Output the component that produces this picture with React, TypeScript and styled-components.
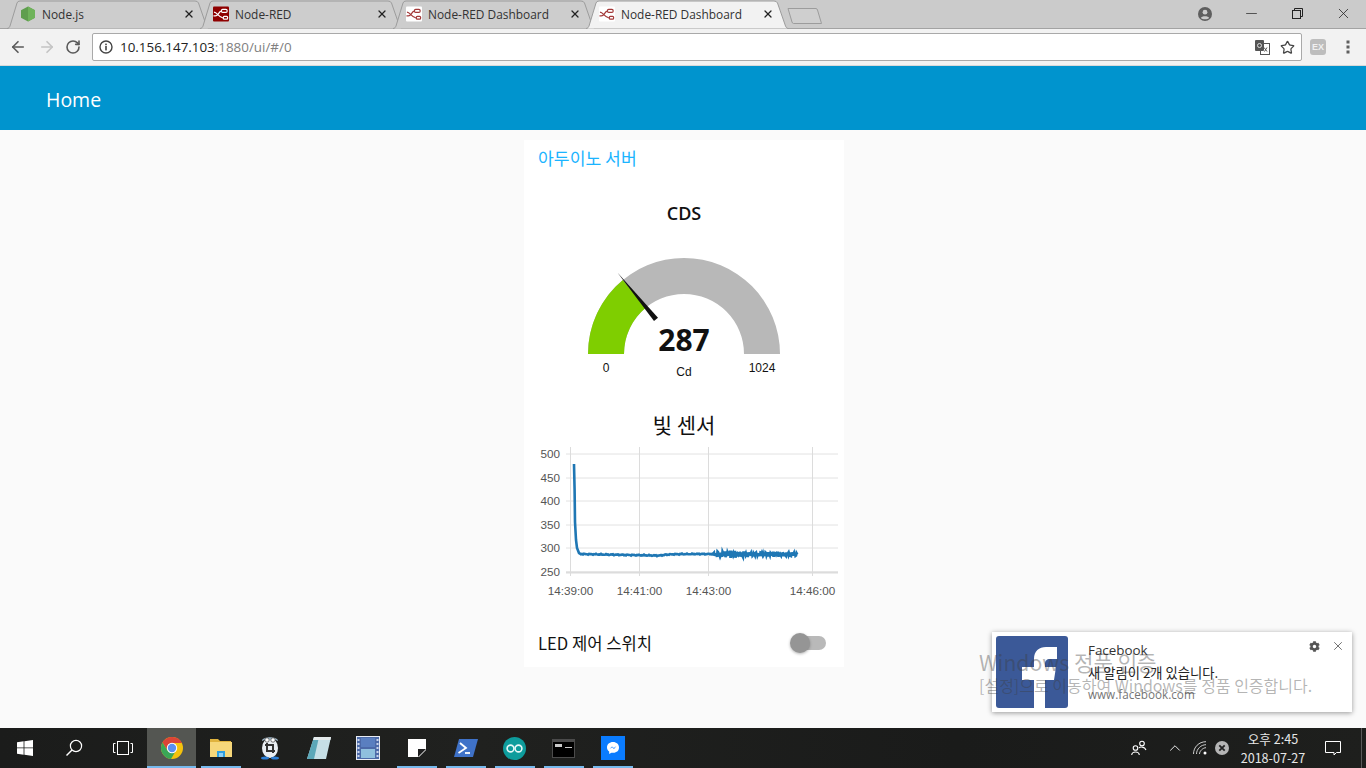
import React from 'react';
import styled, { createGlobalStyle } from 'styled-components';
import { ArrowLeft, ArrowRight, RotateCw, Star, X, Minus, ChevronUp } from 'lucide-react';
import { FaCog } from 'react-icons/fa';

const UI_FONT = '"Open Sans", "Noto Sans CJK KR", sans-serif';
const KR_FONT = '"Noto Sans CJK KR", "Open Sans", sans-serif';

const GlobalStyle = createGlobalStyle`
  html, body {
    margin: 0;
    padding: 0;
    height: 100%;
    overflow: hidden;
  }
  #root { height: 100%; }
  * { box-sizing: border-box; }
`;

const Screen = styled.div`
  position: relative;
  height: 768px;
  display: flex;
  flex-direction: column;
  background: #fafafa;
  font-family: ${UI_FONT};
  overflow: hidden;
`;

/* browser chrome */
const TabStrip = styled.div`
  height: 29px;
  flex-shrink: 0;
  display: flex;
  padding-left: 7px;
  background: #cbcbcb;
  border-bottom: 1px solid #a3a3a3;
`;

const TabItem = styled.div<{ $active?: boolean }>`
  position: relative;
  width: 193px;
  height: 29px;
  display: flex;
  align-items: center;
  padding: 0 5px 2px 13px;
  z-index: ${props => (props.$active ? 2 : 1)};
`;

const TabShapeSvg = styled.svg`
  position: absolute;
  left: 0;
  top: 0;
`;

const TabIcon = styled.span`
  position: relative;
  width: 16px;
  height: 16px;
  display: flex;
  flex-shrink: 0;
`;

const TabTitle = styled.span`
  position: relative;
  margin-left: 6px;
  font-size: 11.9px;
  color: #333;
  white-space: nowrap;
`;

const TabClose = styled.span`
  position: relative;
  margin-left: auto;
  width: 12px;
  height: 12px;
  display: flex;
  color: #222;
`;

const NewTab = styled.svg`
  flex-shrink: 0;
  margin: 7px 0 0 8px;
  position: relative;
  z-index: 0;
`;

const WindowControls = styled.div`
  margin-left: auto;
  display: flex;
  align-items: center;
  height: 27px;
`;

const ControlButton = styled.span<{ $w: number }>`
  width: ${props => props.$w}px;
  display: flex;
  justify-content: center;
  color: #222;
`;

const Toolbar = styled.div`
  height: 37px;
  flex-shrink: 0;
  display: flex;
  align-items: center;
  padding: 0 8px;
  background: #f2f2f2;
  border-bottom: 1px solid #d9d9d9;
`;

const NavButton = styled.span<{ $disabled?: boolean; $gap?: number }>`
  width: 20px;
  margin-left: ${props => props.$gap ?? 0}px;
  display: flex;
  justify-content: center;
  flex-shrink: 0;
  color: ${props => (props.$disabled ? '#c4c4c4' : '#5a5a5a')};
`;

const Omnibox = styled.div`
  flex: 1;
  height: 28px;
  margin: 0 6px 0 9px;
  padding: 0 6px;
  display: flex;
  align-items: center;
  background: #fff;
  border: 1px solid #a9a9a9;
  border-radius: 2px;
`;

const UrlText = styled.span`
  margin-left: 7px;
  font-size: 13.4px;
  color: #222;
`;

const UrlMuted = styled.span`
  color: #808080;
`;

const OmniActions = styled.div`
  margin-left: auto;
  display: flex;
  align-items: center;
  gap: 10px;
  color: #444;
`;

const ExtBadge = styled.span`
  width: 16px;
  height: 16px;
  border-radius: 3px;
  background: #bdbdbd;
  color: #f0f0f0;
  font-family: "Liberation Sans", sans-serif;
  font-size: 9px;
  font-weight: 700;
  display: flex;
  align-items: center;
  justify-content: center;
`;

/* dashboard */
const AppHeader = styled.header`
  height: 64px;
  flex-shrink: 0;
  display: flex;
  align-items: center;
  padding: 2px 0 0 46px;
  background: #0094ce;
  color: #fff;
  font-size: 19.5px;
`;

const Content = styled.main`
  flex: 1;
  display: flex;
  justify-content: center;
  padding: 10px 0 0 2px;
`;

const Card = styled.section`
  width: 320px;
  height: 527px;
  display: flex;
  flex-direction: column;
  background: #fff;
`;

const GroupTitle = styled.div`
  height: 35px;
  margin-bottom: 1px;
  display: flex;
  align-items: center;
  padding-left: 14px;
  color: #1bb4ff;
  font-family: ${KR_FONT};
  font-size: 17.2px;
`;

const GaugeTitle = styled.div`
  height: 74px;
  display: flex;
  align-items: center;
  justify-content: center;
  color: #111;
  font-size: 18px;
  font-weight: 600;
`;

const ChartTitle = styled.div`
  height: 38px;
  margin-top: 20px;
  display: flex;
  align-items: center;
  justify-content: center;
  color: #111;
  font-family: ${KR_FONT};
  font-size: 21px;
`;

const WidgetSvg = styled.svg`
  display: block;
  flex-shrink: 0;
`;

const SwitchRow = styled.div`
  height: 48px;
  margin-top: 14px;
  display: flex;
  align-items: center;
  justify-content: space-between;
  padding: 0 18px 0 14px;
  color: #111;
  font-family: ${KR_FONT};
  font-size: 16.6px;
`;

const SwitchTrack = styled.span`
  position: relative;
  width: 33px;
  height: 14px;
  border-radius: 7px;
  background: #b9b9b9;
`;

const SwitchThumb = styled.span`
  position: absolute;
  left: -3px;
  top: -3px;
  width: 20px;
  height: 20px;
  border-radius: 50%;
  background: #959595;
  box-shadow: 0 1px 3px rgba(0, 0, 0, 0.3);
`;

/* overlays */
const Notification = styled.aside`
  position: absolute;
  left: 992px;
  top: 632px;
  width: 360px;
  height: 80px;
  padding: 4px;
  display: flex;
  background: #fff;
  box-shadow: 0 1px 5px rgba(0, 0, 0, 0.4);
`;

const NotifyBody = styled.div`
  margin-left: 20px;
  display: flex;
  flex-direction: column;
  padding-top: 4px;
`;

const NotifyTitle = styled.div`
  font-size: 13.4px;
  line-height: 20px;
  color: #333;
`;

const NotifyMessage = styled.div`
  margin-top: 3px;
  font-family: ${KR_FONT};
  font-size: 13.3px;
  line-height: 20px;
  color: #222;
`;

const NotifySource = styled.div`
  margin-top: 1px;
  font-size: 11.7px;
  line-height: 20px;
  color: #757575;
`;

const NotifyActions = styled.div`
  position: absolute;
  right: 7px;
  top: 7px;
  display: flex;
  align-items: center;
  gap: 11px;
  color: #555;
`;

const Watermark = styled.div`
  position: absolute;
  left: 979px;
  top: 649px;
  color: rgba(60, 60, 60, 0.38);
  font-family: ${KR_FONT};
  pointer-events: none;
`;

const WatermarkHead = styled.div`
  font-size: 21.2px;
  line-height: 26px;
`;

const WatermarkSub = styled.div`
  font-size: 16px;
  line-height: 20px;
`;

/* taskbar */
const Taskbar = styled.footer`
  height: 40px;
  flex-shrink: 0;
  display: flex;
  align-items: stretch;
  background: linear-gradient(90deg, #1b1c1b, #20211f 35%, #1a1b1a 70%, #1e1f1d);
  color: #fff;
`;

const TaskButton = styled.div<{ $active?: boolean; $running?: boolean }>`
  position: relative;
  width: 49px;
  display: flex;
  align-items: center;
  justify-content: center;
  background: ${props => (props.$active ? '#545652' : 'transparent')};

  &::after {
    content: '';
    display: ${props => (props.$running ? 'block' : 'none')};
    position: absolute;
    bottom: 0;
    left: ${props => (props.$active ? 0 : '5px')};
    right: ${props => (props.$active ? 0 : '4px')};
    height: 2px;
    background: #76b9ed;
  }
`;

const Tray = styled.div`
  margin-left: auto;
  display: flex;
  align-items: center;
`;

const TraySlot = styled.span<{ $w: number }>`
  width: ${props => props.$w}px;
  display: flex;
  justify-content: center;
`;

const Clock = styled.div`
  width: 74px;
  font-family: ${KR_FONT};
  font-size: 12.6px;
  line-height: 19px;
  text-align: center;
  white-space: nowrap;
  color: #e8e8e8;
`;

const DesktopEdge = styled.span`
  width: 5px;
  margin-left: 5px;
  border-left: 1px solid #5a5a5a;
  align-self: stretch;
`;

/* drawings */
const TabShape: React.FC<{ active?: boolean }> = ({ active }) => (
  <TabShapeSvg width="204" height="29" viewBox="0 0 204 29">
    <path
      d="M0 28.5 C2 28.5 2.5 27 3 26 L10 3 Q10.6 1 13 1 H188 Q190.6 1 191.5 3 L199.5 26 C200 27 200.5 28.5 202.5 28.5"
      fill={active ? '#f2f2f2' : '#cdcdcd'}
      stroke="#9c9c9c"
    />
  </TabShapeSvg>
);

const NodeJsIcon = () => (
  <svg width="16" height="16" viewBox="0 0 16 16">
    <path d="M8 0.5 L15 4.3 V11.7 L8 15.5 L1 11.7 V4.3 Z" fill="#5f9e4e" />
    <path d="M8 0.5 L15 4.3 V11.7 L8 15.5 Z" fill="#6fb35a" />
  </svg>
);

const NodeRedIcon: React.FC<{ filled?: boolean }> = ({ filled }) => (
  <svg width="17" height="16" viewBox="0 0 17 16">
    <rect width="17" height="16" rx="1" fill={filled ? '#8f0000' : '#fff'} />
    <g fill="none" stroke={filled ? '#fff' : '#a33a3a'} strokeWidth="1.3">
      <path d="M0.5 10 H2.5 C6 10 6 5 9 5" />
      <path d="M1 6 C4.5 6 6 12 10.5 12" />
      <rect x="9" y="3" width="6" height="3.2" rx="1.2" />
      <rect x="11" y="10.5" width="4.5" height="3" rx="1" />
    </g>
  </svg>
);

const AccountIcon = () => (
  <svg width="14" height="14" viewBox="0 0 14 14">
    <circle cx="7" cy="7" r="7" fill="#5f5f5f" />
    <circle cx="7" cy="5.2" r="2.4" fill="#cbcbcb" />
    <path d="M2.8 11 C3.6 8.8 10.4 8.8 11.2 11 C9.5 12.8 4.5 12.8 2.8 11 Z" fill="#cbcbcb" />
  </svg>
);

const RestoreIcon = () => (
  <svg width="11" height="11" viewBox="0 0 11 11" fill="none" stroke="#222">
    <rect x="0.5" y="2.5" width="8" height="8" />
    <path d="M2.5 2.5 V0.5 H10.5 V8.5 H8.5" />
  </svg>
);

const InfoIcon = () => (
  <svg width="14" height="14" viewBox="0 0 14 14">
    <circle cx="7" cy="7" r="6" fill="none" stroke="#444" strokeWidth="1.4" />
    <rect x="6.2" y="6" width="1.6" height="4.4" fill="#444" />
    <rect x="6.2" y="3.6" width="1.6" height="1.6" fill="#444" />
  </svg>
);

const TranslateIcon = () => (
  <svg width="15" height="15" viewBox="0 0 15 15">
    <rect x="5.5" y="3.5" width="9" height="11" fill="#fff" stroke="#555" />
    <rect x="0" y="0" width="9" height="11" rx="1" fill="#555" />
    <circle cx="4.5" cy="5.5" r="2" fill="none" stroke="#ddd" />
    <path d="M9 7.5 L12 11.5 M12 7.5 L9.5 11.5" stroke="#555" />
  </svg>
);

const MenuDots = () => (
  <svg width="4" height="14" viewBox="0 0 4 14" fill="#5f5f5f">
    <rect x="0.5" y="0.5" width="3" height="3" />
    <rect x="0.5" y="5.5" width="3" height="3" />
    <rect x="0.5" y="10.5" width="3" height="3" />
  </svg>
);

const FacebookTile = () => (
  <svg width="72" height="72" viewBox="0 0 72 72">
    <rect width="72" height="72" rx="3" fill="#3b5998" />
    <path
      d="M38 72 V44 H26 V31 H38 V23 C38 15 43 11 50 11 H61 V23 H54 C50.5 23 49 25 49 28 V31 H60 L58 44 H49 V72 Z"
      fill="#fff"
    />
  </svg>
);

const StartIcon = () => (
  <svg width="16" height="16" viewBox="0 0 16 16" fill="#fff">
    <path d="M0 2.3 L6.6 1.3 V7.5 H0 Z" />
    <path d="M7.4 1.2 L16 0 V7.5 H7.4 Z" />
    <path d="M0 8.3 H6.6 V14.7 L0 13.7 Z" />
    <path d="M7.4 8.3 H16 V16 L7.4 14.8 Z" />
  </svg>
);

const SearchIcon = () => (
  <svg width="18" height="18" viewBox="0 0 18 18" fill="none" stroke="#fff" strokeWidth="1.2">
    <circle cx="11" cy="7" r="5.6" />
    <path d="M7 11 L1.5 16.5" strokeWidth="1.5" />
  </svg>
);

const TaskViewIcon = () => (
  <svg width="20" height="14" viewBox="0 0 20 14" fill="none" stroke="#fff">
    <rect x="4.5" y="0.5" width="11" height="13" />
    <path d="M2.5 2.5 H0.5 V11.5 H2.5 M17.5 2.5 H19.5 V11.5 H17.5" />
  </svg>
);

const ChromeIcon = () => (
  <svg width="22" height="22" viewBox="0 0 22 22">
    <circle cx="11" cy="11" r="11" fill="#f4c20d" />
    <path d="M11 0 A11 11 0 0 0 1.5 5.5 L6.5 13.5 L11 6 H21 A11 11 0 0 0 11 0 Z" fill="#db4437" />
    <path d="M1.5 5.5 A11 11 0 0 0 10 22 L15 13.5 L6.5 13.5 Z" fill="#3aa757" />
    <circle cx="11" cy="11" r="5.2" fill="#fff" />
    <circle cx="11" cy="11" r="4.2" fill="#5a8ff0" />
  </svg>
);

const ExplorerIcon = () => (
  <svg width="22" height="20" viewBox="0 0 22 20">
    <path d="M0 1 H8 L10 3 H21 V5 H0 Z" fill="#e0b33e" />
    <rect y="4" width="22" height="15" fill="#f6d77a" />
    <path d="M7 19 V13 H15 V19 H12.5 V15.5 H9.5 V19 Z" fill="#2f9fe0" />
    <rect x="9" y="15" width="4" height="4" fill="#8fd0f5" />
  </svg>
);

const PenguinIcon = () => (
  <svg width="22" height="24" viewBox="0 0 22 24">
    <ellipse cx="11" cy="12" rx="8" ry="10" fill="#e9eef2" />
    <path d="M3 5 C3 0 19 0 19 5 C15 3 7 3 3 5 Z" fill="#9fb7c8" />
    <circle cx="8" cy="4" r="2.2" fill="#fff" stroke="#222" strokeWidth="0.6" />
    <circle cx="14" cy="4" r="2.2" fill="#fff" stroke="#222" strokeWidth="0.6" />
    <path d="M6 9 H14 V17 M8 7 V15 H16" fill="none" stroke="#333" strokeWidth="2" />
    <ellipse cx="6" cy="22" rx="4" ry="1.6" fill="#2d7fd6" />
    <ellipse cx="16" cy="22" rx="4" ry="1.6" fill="#2d7fd6" />
  </svg>
);

const NotepadIcon = () => (
  <svg width="24" height="22" viewBox="0 0 24 22">
    <path d="M7 0 H24 L19 22 H0 Z" fill="#c6dfe6" />
    <path d="M7 0 L0 22 H7 L12 0 Z" fill="#5ba7b8" />
    <path d="M7 0 H24 L23.4 3 H6 Z" fill="#e4eaec" />
  </svg>
);

const FilmIcon = () => (
  <svg width="24" height="24" viewBox="0 0 24 24">
    <rect width="24" height="24" fill="#e8ecf5" />
    <rect x="1" y="1" width="22" height="22" fill="#4c6aa8" />
    <rect x="5" y="2" width="14" height="9" fill="#5a7fc0" />
    <rect x="5" y="13" width="14" height="9" fill="#8fc0de" />
    <path d="M2.5 3 V21 M21.5 3 V21" stroke="#c8d4ec" strokeWidth="2" strokeDasharray="2 2" />
  </svg>
);

const StickyIcon = () => (
  <svg width="18" height="18" viewBox="0 0 18 18">
    <path d="M0 0 H18 V9 H9 V18 H0 Z" fill="#fff" />
    <path d="M18 9 V11 L11 18 H9 V9 Z" fill="#fff" />
    <path d="M18 10 L10 18 V10 Z" fill="#1f1f1f" />
  </svg>
);

const PowerShellIcon = () => (
  <svg width="24" height="18" viewBox="0 0 24 18">
    <path d="M5 0 H24 L19 18 H0 Z" fill="#3f72c8" />
    <path d="M6 4 L12 9 L4.5 14" fill="none" stroke="#fff" strokeWidth="1.8" />
    <path d="M11 14 H16" stroke="#fff" strokeWidth="1.8" />
  </svg>
);

const ArduinoIcon = () => (
  <svg width="23" height="23" viewBox="0 0 23 23">
    <circle cx="11.5" cy="11.5" r="11.5" fill="#0e9c9c" />
    <g fill="none" stroke="#e6f7f7" strokeWidth="1.6">
      <circle cx="7.5" cy="11.5" r="3.4" />
      <circle cx="15.5" cy="11.5" r="3.4" />
    </g>
  </svg>
);

const CmdIcon = () => (
  <svg width="23" height="19" viewBox="0 0 23 19">
    <rect width="23" height="19" fill="#4b4b4b" />
    <rect x="1" y="3" width="21" height="15" fill="#000" />
    <rect x="3" y="5" width="7" height="3" fill="#c9c9c9" />
    <rect x="13" y="8" width="7" height="1" fill="#c9c9c9" />
  </svg>
);

const MessengerIcon = () => (
  <svg width="24" height="24" viewBox="0 0 24 24">
    <rect width="24" height="24" fill="#0a7cff" />
    <path d="M12 6 C8.5 6 6 8.4 6 11.4 C6 13.1 6.8 14.6 8.2 15.6 V18 L10.4 16.7 C12 17.1 18 16.8 18 11.4 C18 8.4 15.5 6 12 6 Z" fill="#fff" />
    <path d="M8.5 13 L11 10.4 L12.9 12 L15.5 10 L13 12.9 L11.2 11.3 Z" fill="#0a7cff" />
  </svg>
);

const PeopleIcon = () => (
  <svg width="16" height="16" viewBox="0 0 16 16" fill="none" stroke="#fff" strokeWidth="1.1">
    <circle cx="4.5" cy="8" r="2.3" />
    <path d="M0.7 15 C1 11 8 11 8.3 15" />
    <circle cx="11" cy="3.5" r="2.3" />
    <path d="M8 8 C9 6.6 13.6 6.5 15 10" />
  </svg>
);

const WifiIcon = () => (
  <svg width="14" height="14" viewBox="0 0 14 14" fill="none" stroke="#cfcfcf">
    <path d="M0.5 13 C0.5 6 6 0.7 13 0.7" />
    <path d="M3.5 13 C3.5 8 8 3.7 13 3.7" />
    <path d="M6.5 13 C6.5 10 10 6.7 13 6.7" />
    <circle cx="12" cy="12" r="1.5" fill="#fff" stroke="none" />
  </svg>
);

const ErrorBadge = () => (
  <svg width="14" height="14" viewBox="0 0 14 14">
    <circle cx="7" cy="7" r="7" fill="#b5b5b5" />
    <path d="M4.3 4.3 L9.7 9.7 M9.7 4.3 L4.3 9.7" stroke="#222" strokeWidth="1.8" />
  </svg>
);

const ActionCenterIcon = () => (
  <svg width="16" height="15" viewBox="0 0 16 15" fill="none" stroke="#fff">
    <path d="M0.5 0.5 H15.5 V11.5 H11.5 L9 14 V11.5 H0.5 Z" />
  </svg>
);

const gaugeStart = Math.PI * (287 / 1024);
const polar = (r: number, a: number) => `${(684 - r * Math.cos(a)).toFixed(2)} ${(354 - r * Math.sin(a)).toFixed(2)}`;

const Gauge = () => (
  <WidgetSvg width="320" height="135" viewBox="524 250 320 135">
    <path d="M588 354 A96 96 0 0 1 780 354 H744 A60 60 0 0 0 624 354 Z" fill="#b8b8b8" />
    <path d={`M588 354 A96 96 0 0 1 ${polar(96, gaugeStart)} L${polar(60, gaugeStart)} A60 60 0 0 0 624 354 Z`} fill="#7fce00" />
    <path d="M617.6 272.8 L658 317.8 L654 321 Z" fill="#111" />
    <text x="684" y="351" textAnchor="middle" fontFamily="'Open Sans', sans-serif" fontWeight="700" fontSize="30" fill="#111">287</text>
    <g fontFamily="'Liberation Sans', sans-serif" fontSize="12" fill="#111" textAnchor="middle">
      <text x="606" y="372">0</text>
      <text x="684" y="376">Cd</text>
      <text x="762" y="372">1024</text>
    </g>
  </WidgetSvg>
);

// sensor trace: a sharp drop then a flat line that gets noisy after 14:43
const buildTrace = () => {
  const points: string[] = ['574 464', '574.6 490', '575 522', '576 540', '577 548', '579 553'];
  for (let x = 580; x <= 797; x += 1) {
    const noisy = x > 713;
    const amp = noisy ? 3.4 * (x < 745 ? 1 : 0.7) : 0.6;
    const wobble = Math.sin(x * 1.9) * Math.cos(x * 0.73 + 1);
    const drift = x < 660 ? 0.5 + (x - 580) * 0.02 : 0.5 + 1.6 * Math.exp(-(x - 660) / 8);
    points.push(`${x} ${(553.5 + drift + wobble * amp).toFixed(1)}`);
    if (noisy) points.push(`${x + 0.5} ${(554.5 - wobble * amp).toFixed(1)}`);
  }
  return points.join(' ');
};

const yTicks: [number, string][] = [
  [454, '500'],
  [478, '450'],
  [501, '400'],
  [525, '350'],
  [548, '300'],
  [572, '250'],
];

const xTicks: [number, string][] = [
  [639.5, '14:41:00'],
  [708.5, '14:43:00'],
  [812.5, '14:46:00'],
];

const Chart = () => (
  <WidgetSvg width="320" height="162" viewBox="524 443 320 162">
    <g stroke="#e2e2e2">
      {yTicks.map(([y]) => (
        <path key={y} d={`M566 ${y} H838`} />
      ))}
    </g>
    <g stroke="#dcdcdc">
      <path d="M570.5 447 V576" />
      {xTicks.map(([x]) => (
        <path key={x} d={`M${x} 447 V576`} />
      ))}
      <path d="M566 572.5 H838" strokeWidth="2" />
    </g>
    <polyline points={buildTrace()} fill="none" stroke="#1f77b4" strokeWidth="2.6" />
    <g fontFamily="'Liberation Sans', sans-serif" fontSize="11.7" fill="#555">
      {yTicks.map(([y, label]) => (
        <text key={label} x="560" y={y + 4} textAnchor="end">{label}</text>
      ))}
      <text x="570.5" y="595" textAnchor="middle">14:39:00</text>
      {xTicks.map(([x, label]) => (
        <text key={label} x={x} y="595" textAnchor="middle">{label}</text>
      ))}
    </g>
  </WidgetSvg>
);

const tabs = [
  { title: 'Node.js', icon: <NodeJsIcon /> },
  { title: 'Node-RED', icon: <NodeRedIcon filled /> },
  { title: 'Node-RED Dashboard', icon: <NodeRedIcon /> },
  { title: 'Node-RED Dashboard', icon: <NodeRedIcon />, active: true },
];

const taskApps = [
  { id: 'chrome', icon: <ChromeIcon />, active: true, running: true },
  { id: 'explorer', icon: <ExplorerIcon />, running: true },
  { id: 'penguin', icon: <PenguinIcon /> },
  { id: 'notepad', icon: <NotepadIcon /> },
  { id: 'film', icon: <FilmIcon /> },
  { id: 'sticky', icon: <StickyIcon />, running: true },
  { id: 'powershell', icon: <PowerShellIcon />, running: true },
  { id: 'arduino', icon: <ArduinoIcon />, running: true },
  { id: 'cmd', icon: <CmdIcon />, running: true },
  { id: 'messenger', icon: <MessengerIcon />, running: true },
];

const App: React.FC = () => (
  <Screen>
    <GlobalStyle />
    <TabStrip>
      {tabs.map((tab, i) => (
        <TabItem key={i} $active={tab.active}>
          <TabShape active={tab.active} />
          <TabIcon>{tab.icon}</TabIcon>
          <TabTitle>{tab.title}</TabTitle>
          <TabClose>
            <X size={12} strokeWidth={2.6} />
          </TabClose>
        </TabItem>
      ))}
      <NewTab width="36" height="18" viewBox="0 0 36 18">
        <path d="M1 1.5 H29 Q30 1.5 30.5 3 L34.5 16.5 H6.5 Q5.5 16.5 5 15 Z" fill="#cfcfcf" stroke="#9c9c9c" />
      </NewTab>
      <WindowControls>
        <ControlButton $w={46}><AccountIcon /></ControlButton>
        <ControlButton $w={46}><Minus size={17} strokeWidth={1} /></ControlButton>
        <ControlButton $w={46}><RestoreIcon /></ControlButton>
        <ControlButton $w={46}><X size={17} strokeWidth={1.1} /></ControlButton>
      </WindowControls>
    </TabStrip>
    <Toolbar>
      <NavButton><ArrowLeft size={18} strokeWidth={2.2} /></NavButton>
      <NavButton $disabled $gap={9}><ArrowRight size={18} strokeWidth={2.2} /></NavButton>
      <NavButton $gap={6}><RotateCw size={16} strokeWidth={2.4} /></NavButton>
      <Omnibox>
        <InfoIcon />
        <UrlText>
          10.156.147.103<UrlMuted>:1880/ui/#/0</UrlMuted>
        </UrlText>
        <OmniActions>
          <TranslateIcon />
          <Star size={15} strokeWidth={2} />
        </OmniActions>
      </Omnibox>
      <NavButton><ExtBadge>EX</ExtBadge></NavButton>
      <NavButton $gap={10}><MenuDots /></NavButton>
    </Toolbar>
    <AppHeader>Home</AppHeader>
    <Content>
      <Card>
        <GroupTitle>아두이노 서버</GroupTitle>
        <GaugeTitle>CDS</GaugeTitle>
        <Gauge />
        <ChartTitle>빛 센서</ChartTitle>
        <Chart />
        <SwitchRow>
          LED 제어 스위치
          <SwitchTrack>
            <SwitchThumb />
          </SwitchTrack>
        </SwitchRow>
      </Card>
    </Content>
    <Taskbar>
      <TaskButton><StartIcon /></TaskButton>
      <TaskButton><SearchIcon /></TaskButton>
      <TaskButton><TaskViewIcon /></TaskButton>
      {taskApps.map(app => (
        <TaskButton key={app.id} $active={app.active} $running={app.running}>
          {app.icon}
        </TaskButton>
      ))}
      <Tray>
        <TraySlot $w={38}><PeopleIcon /></TraySlot>
        <TraySlot $w={34}><ChevronUp size={18} strokeWidth={1.2} color="#fff" /></TraySlot>
        <TraySlot $w={16}><WifiIcon /></TraySlot>
        <TraySlot $w={28}><ErrorBadge /></TraySlot>
        <Clock>
          오후 2:45
          <br />
          2018-07-27
        </Clock>
        <TraySlot $w={46}><ActionCenterIcon /></TraySlot>
        <DesktopEdge />
      </Tray>
    </Taskbar>
    <Notification>
      <FacebookTile />
      <NotifyBody>
        <NotifyTitle>Facebook</NotifyTitle>
        <NotifyMessage>새 알림이 2개 있습니다.</NotifyMessage>
        <NotifySource>www.facebook.com</NotifySource>
      </NotifyBody>
      <NotifyActions>
        <FaCog size={11} />
        <X size={14} strokeWidth={1.4} />
      </NotifyActions>
    </Notification>
    <Watermark>
      <WatermarkHead>Windows 정품 인증</WatermarkHead>
      <WatermarkSub>[설정]으로 이동하여 Windows를 정품 인증합니다.</WatermarkSub>
    </Watermark>
  </Screen>
);

export default App;
